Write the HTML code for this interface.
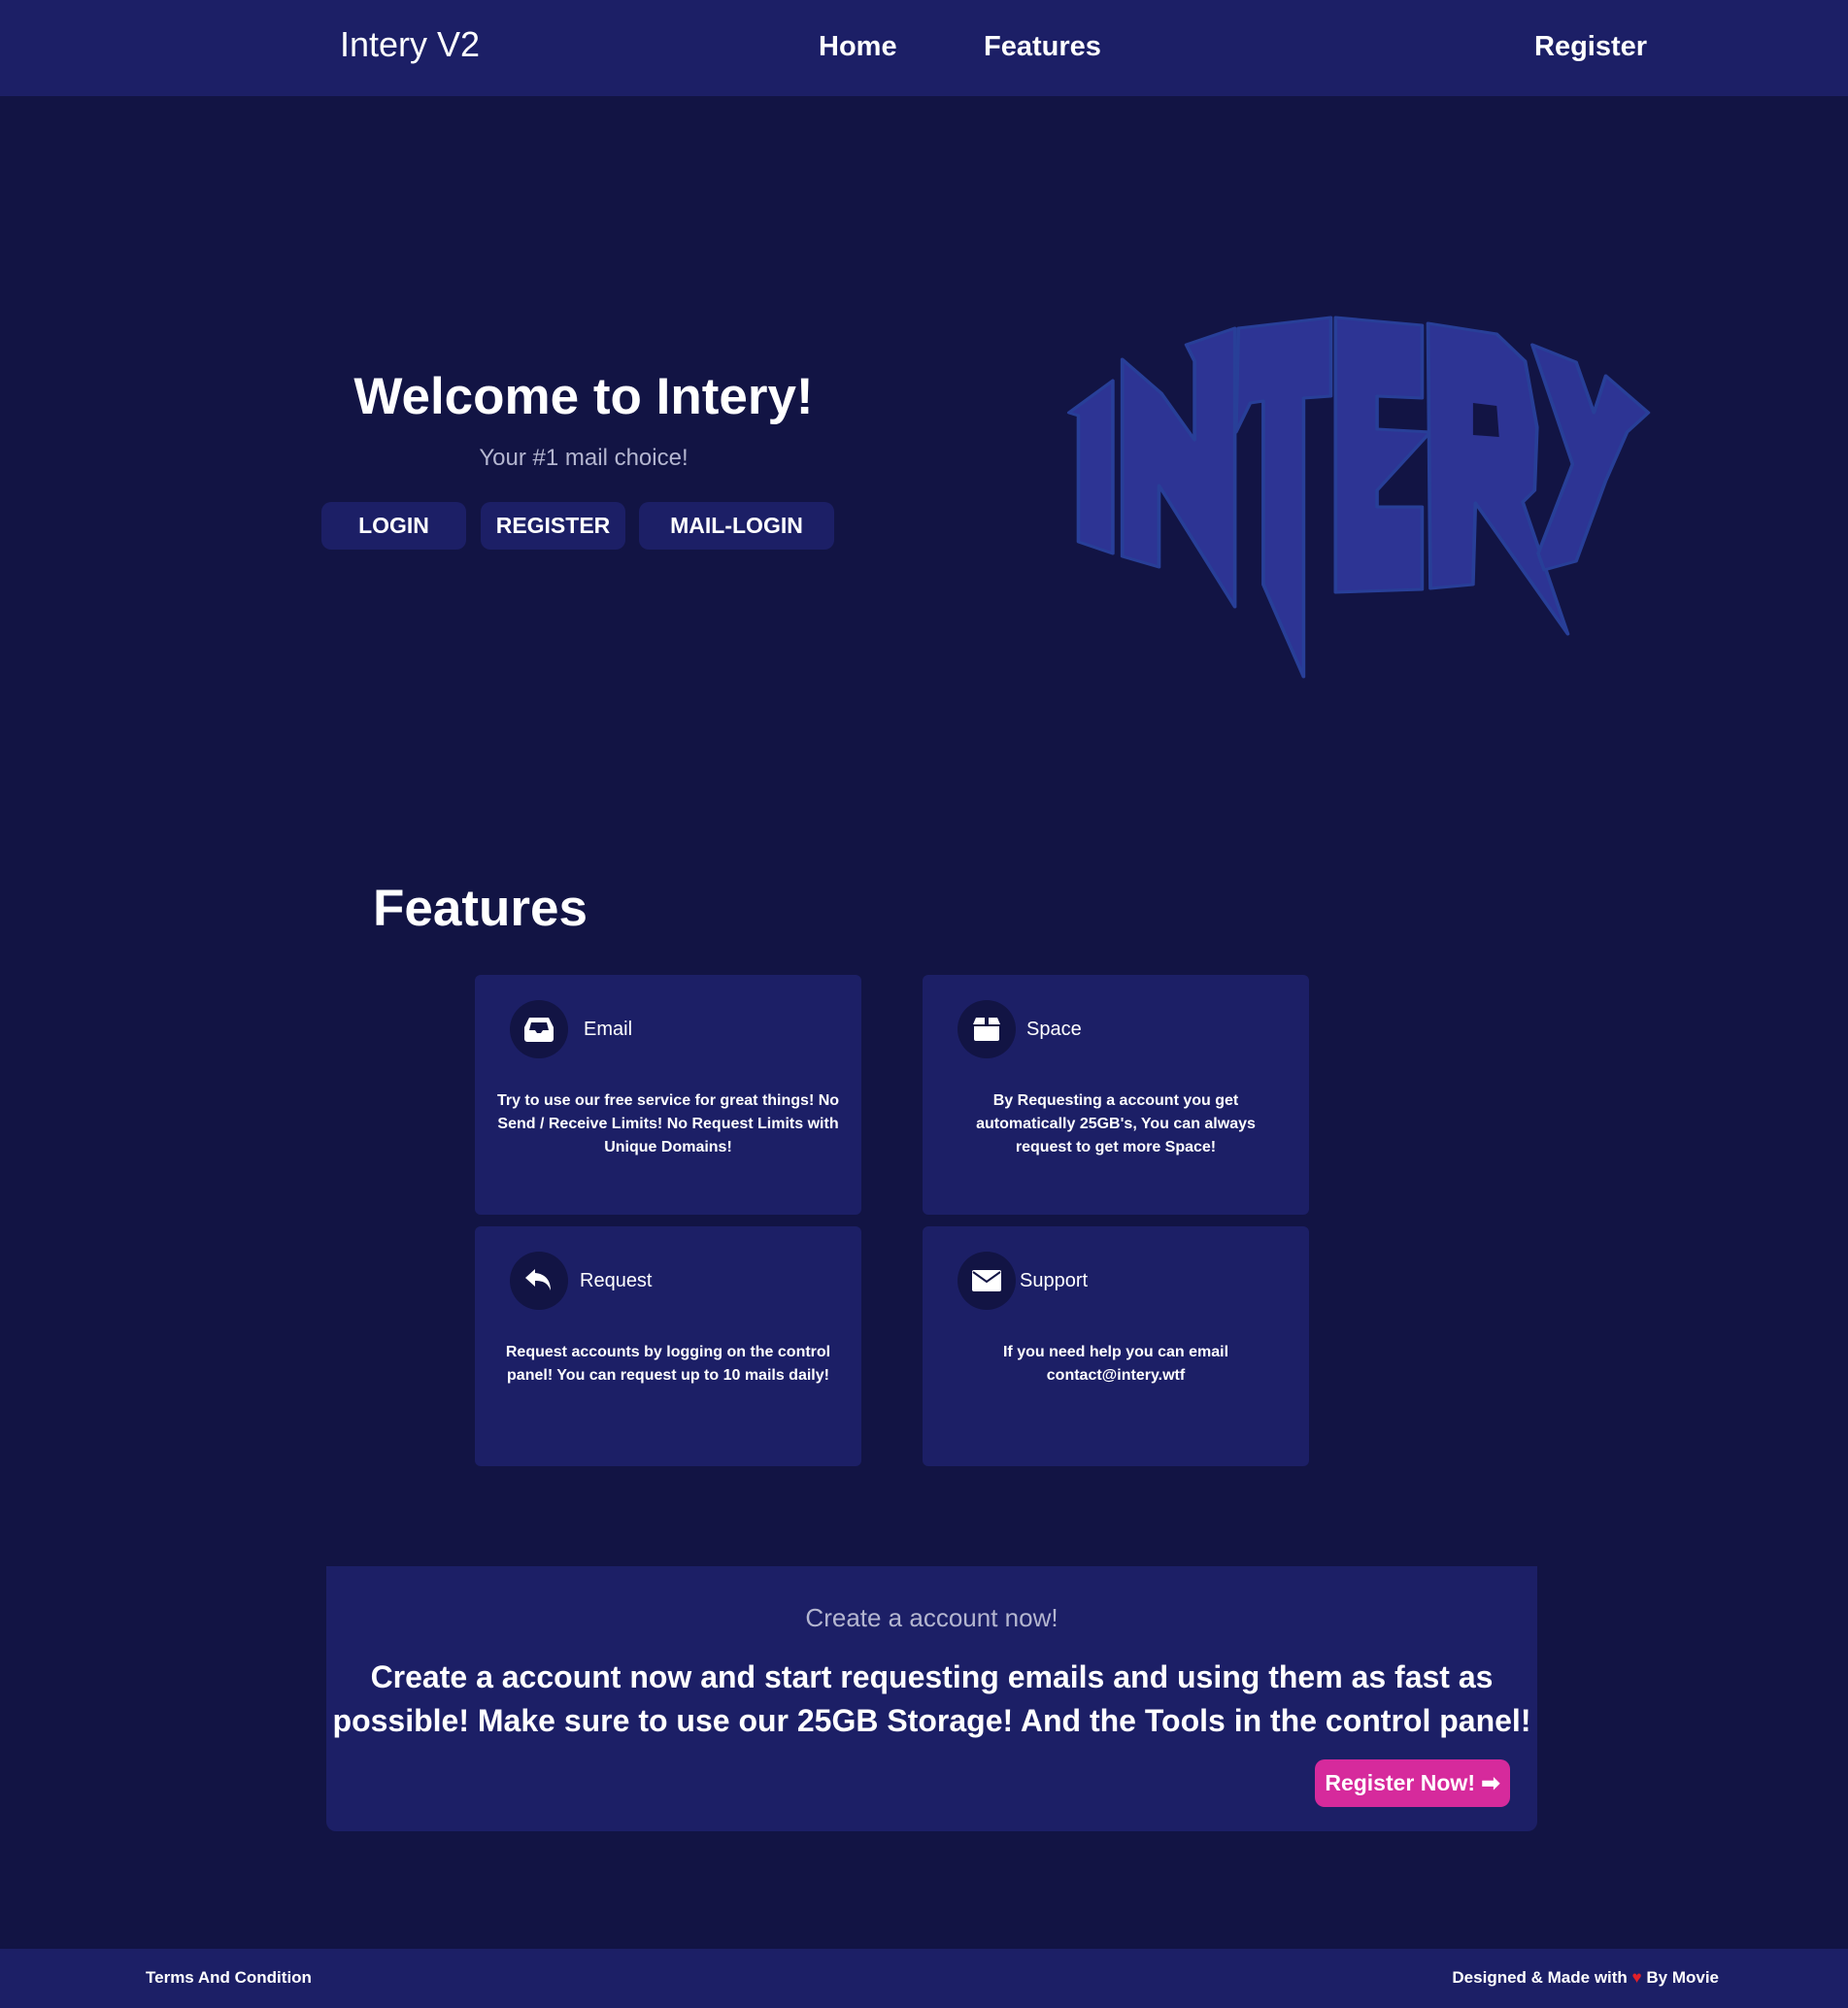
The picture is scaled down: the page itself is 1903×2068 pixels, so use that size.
<!DOCTYPE html>
<html><head><meta charset="utf-8"><style>
*{margin:0;padding:0;box-sizing:border-box}
body{width:1903px;height:2068px;background:#121444;font-family:"Liberation Sans",sans-serif;color:#fff;position:relative;overflow:hidden}
.a{position:absolute}
.nav{left:0;top:0;width:1903px;height:99px;background:#1c1f66}
.nl{font-weight:bold;font-size:29px;top:32px}
.btn{background:#1c1f66;border-radius:10px;height:49px;top:517px;font-weight:bold;font-size:23px;display:flex;align-items:center;justify-content:center}
.card{background:#1c1f66;border-radius:6px;width:398px;height:247px}
.ic{width:60px;height:60px;border-radius:50%;background:#121444;left:36px;top:26px;display:flex;align-items:center;justify-content:center}
.ct{font-size:20px;top:45px}
.cx{left:16px;right:16px;top:118px;text-align:center;font-size:16px;line-height:24px;font-weight:bold}
</style></head><body>
<div class="a nav"></div>
<div class="a" style="left:350px;top:25px;font-size:36px">Intery V2</div>
<div class="a nl" style="left:843px">Home</div>
<div class="a nl" style="left:1013px">Features</div>
<div class="a nl" style="left:1580px">Register</div>

<div class="a" style="left:301px;width:600px;text-align:center;top:378px;font-size:53px;font-weight:bold">Welcome to Intery!</div>
<div class="a" style="left:301px;width:600px;text-align:center;top:458px;font-size:24px;color:#b4b6d0">Your #1 mail choice!</div>
<div class="a btn" style="left:331px;width:149px">LOGIN</div>
<div class="a btn" style="left:495px;width:149px">REGISTER</div>
<div class="a btn" style="left:658px;width:201px">MAIL-LOGIN</div>

<svg class="a" style="left:1080px;top:300px" width="781" height="420" viewBox="0 0 640 420" preserveAspectRatio="none">
<g fill="#2d3494" stroke="#283f98" stroke-width="3" stroke-linejoin="round">
<polygon points="17,125 54,92 54,270 25,258 25,128"/>
<polygon points="62,70 95,105 123,153 123,72 116,55 157,38 157,325 93,200 93,284 62,273"/>
<polygon points="160,38 238,27 238,108 215,110 215,397 181,302 181,113 170,115 158,145"/>
<polygon points="242,27 315,35 315,110 277,108 277,142 322,145 277,205 277,222 315,222 315,307 242,310"/>
<polygon points="320,33 378,44 402,72 412,140 410,205 400,217 438,353 390,270 360,218 358,302 322,306"/>
<polygon points="408,55 445,73 460,125 470,87 506,125 488,145 470,195 445,278 418,287 413,270 442,178"/>
</g>
<polygon points="358,115 378,118 380,150 358,148" fill="#121444"/>
</svg>

<div class="a" style="left:384px;top:905px;font-size:53px;font-weight:bold">Features</div>

<div class="a card" style="left:489px;top:1004px">
<div class="a ic"><svg width="32" height="28" viewBox="0 0 32 28"><path d="M6 2h20l5 10v12a3 3 0 0 1-3 3H4a3 3 0 0 1-3-3V12zM8 7l-2 8h6l2 3h4l2-3h6l-2-8z" fill="#fff" fill-rule="evenodd"/></svg></div>
<div class="a ct" style="left:112px">Email</div>
<div class="a cx">Try to use our free service for great things! No Send / Receive Limits! No Request Limits with Unique Domains!</div>
</div>
<div class="a card" style="left:950px;top:1004px">
<div class="a ic"><svg width="28" height="26" viewBox="0 0 28 26"><path d="M3 1h22l3 7H0zM1 10h26v13a2 2 0 0 1-2 2H3a2 2 0 0 1-2-2z" fill="#fff"/><rect x="12" y="1" width="4" height="9" fill="#121444"/></svg></div>
<div class="a ct" style="left:107px">Space</div>
<div class="a cx" style="left:40px;right:40px">By Requesting a account you get automatically 25GB's, You can always request to get more Space!</div>
</div>
<div class="a card" style="left:489px;top:1263px">
<div class="a ic"><svg width="32" height="28" viewBox="0 0 32 28"><path d="M12 2L2 11l10 9v-6c8 0 13 2 16 10 0-10-5-17-16-18z" fill="#fff"/></svg></div>
<div class="a ct" style="left:108px">Request</div>
<div class="a cx">Request accounts by logging on the control panel! You can request up to 10 mails daily!</div>
</div>
<div class="a card" style="left:950px;top:1263px">
<div class="a ic"><svg width="32" height="24" viewBox="0 0 32 24"><rect x="1" y="1" width="30" height="22" rx="2" fill="#fff"/><path d="M2 3l14 10 14-10" fill="none" stroke="#121444" stroke-width="2"/></svg></div>
<div class="a ct" style="left:100px">Support</div>
<div class="a cx">If you need help you can email contact@intery.wtf</div>
</div>

<div class="a" style="left:336px;top:1613px;width:1247px;height:273px;background:#1c1f66;border-radius:0 0 10px 10px"></div>
<div class="a" style="left:336px;width:1247px;text-align:center;top:1651px;font-size:26px;color:#b4b6d0">Create a account now!</div>
<div class="a" style="left:336px;width:1247px;text-align:center;top:1705px;font-size:32px;line-height:45px;font-weight:bold">Create a account now and start requesting emails and using them as fast as possible! Make sure to use our 25GB Storage! And the Tools in the control panel!</div>
<div class="a" style="left:1354px;top:1812px;width:201px;height:49px;background:#d62a9c;border-radius:10px;font-weight:bold;font-size:23px;display:flex;align-items:center;justify-content:center">Register Now! ➡</div>

<div class="a" style="left:0;top:2007px;width:1903px;height:61px;background:#1c1f66"></div>
<div class="a" style="left:150px;top:2027px;font-size:17px;font-weight:bold">Terms And Condition</div>
<div class="a" style="right:133px;top:2027px;font-size:17px;font-weight:bold">Designed &amp; Made with <span style="color:#e0202a">♥</span> By Movie</div>
</body></html>
